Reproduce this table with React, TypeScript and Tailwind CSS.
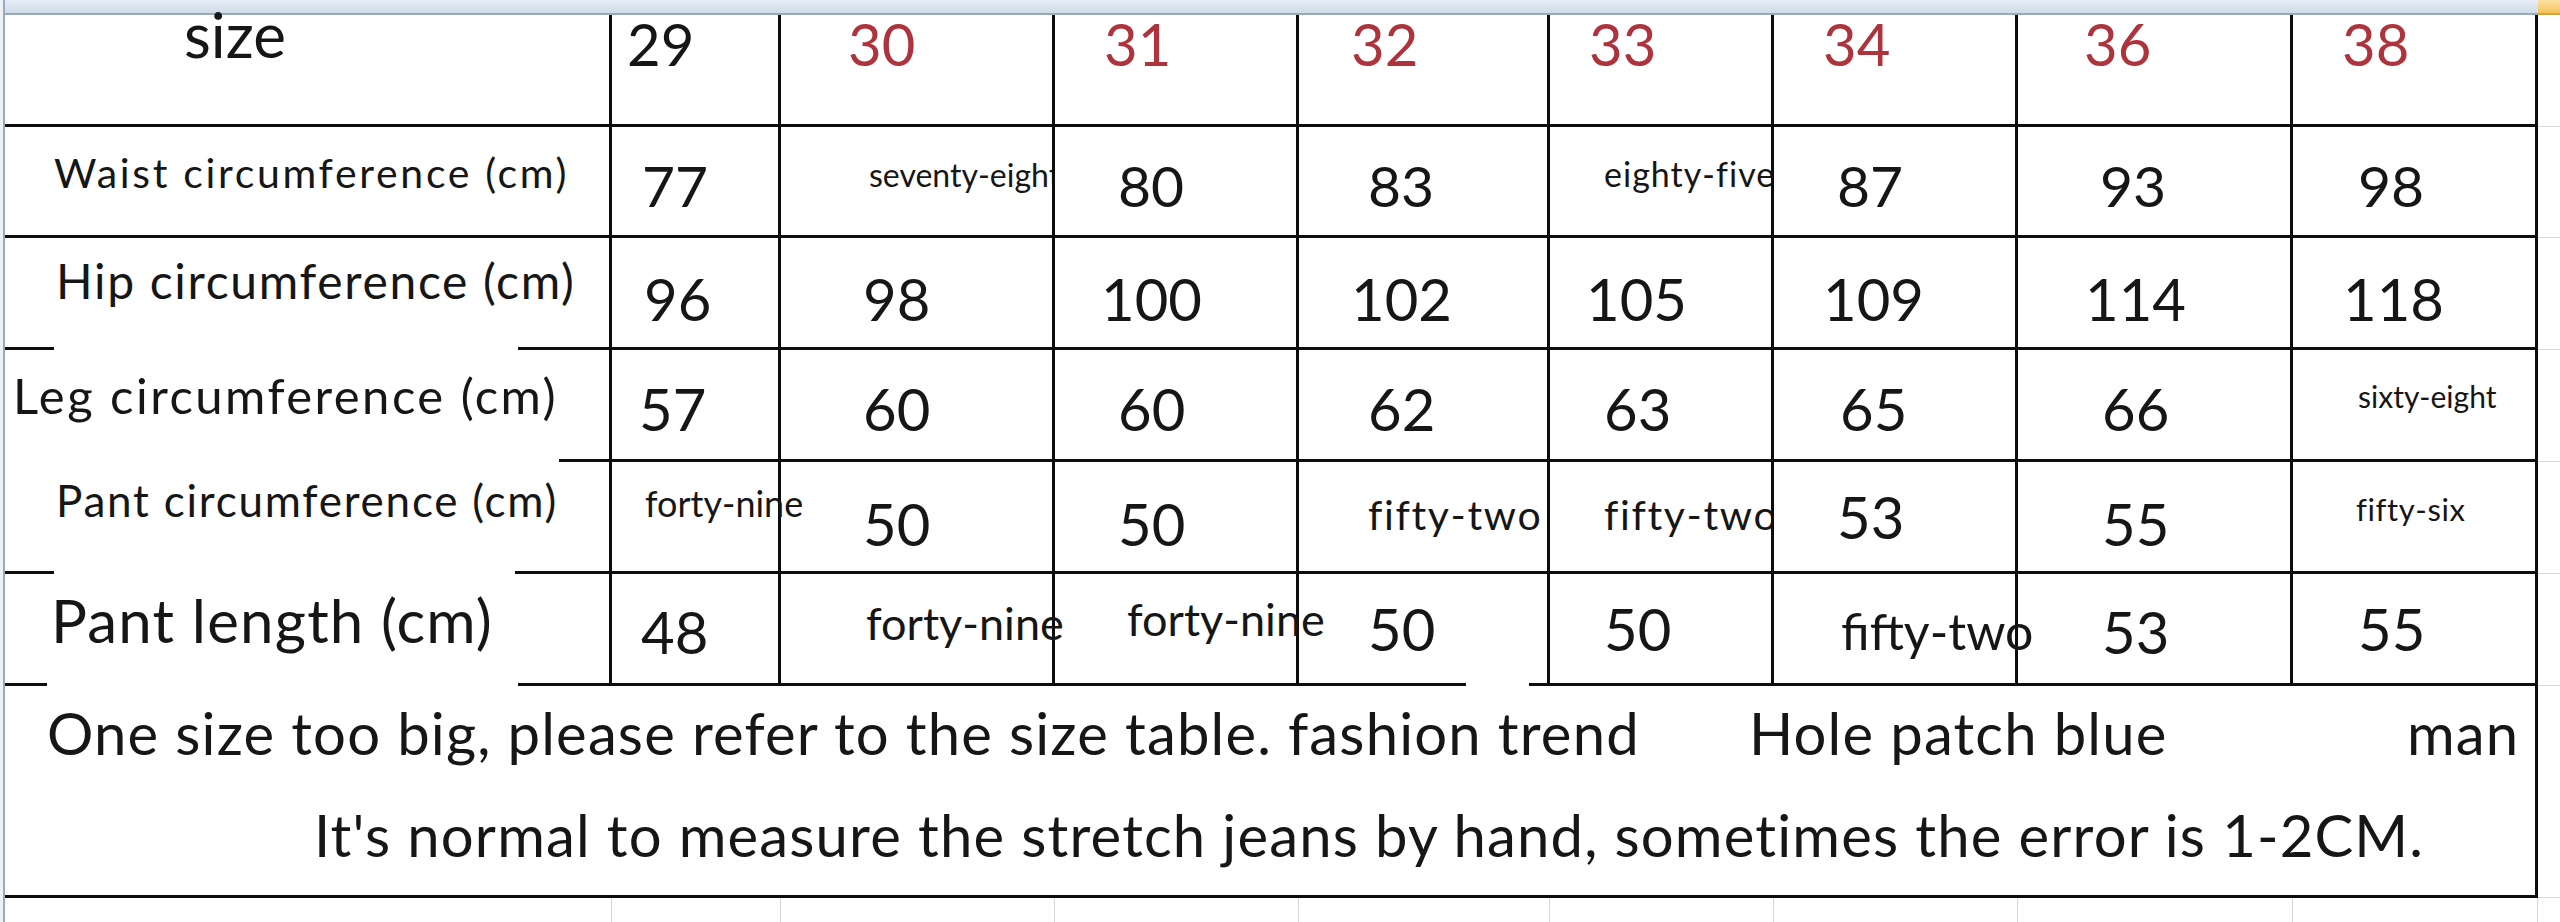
import clsx from "clsx";

type Cell = { t: string; cls: string; red?: boolean; clip?: boolean };
type Row = { h: string; cells: Cell[] };

const cols =
  "grid grid-cols-[607px_169px_274px_244px_251px_224px_244px_275px_245px]";

const rows: Row[] = [
  {
    h: "h-[109px]",
    cells: [
      { t: "size", cls: "pl-[179px] -mt-[12px] text-[62px]" },
      { t: "29", cls: "pl-[15px] text-[58px]" },
      { t: "30", cls: "pl-[67px] text-[58px]", red: true },
      { t: "31", cls: "pl-[49px] text-[58px]", red: true },
      { t: "32", cls: "pl-[52px] text-[58px]", red: true },
      { t: "33", cls: "pl-[39px] text-[58px]", red: true },
      { t: "34", cls: "pl-[49px] text-[58px]", red: true },
      { t: "36", cls: "pl-[66px] text-[58px]", red: true },
      { t: "38", cls: "pl-[49px] text-[58px]", red: true },
    ],
  },
  {
    h: "h-[108px]",
    cells: [
      { t: "Waist circumference (cm)", cls: "pl-[49px] pt-[25px] text-[41px] tracking-[0.065em]" },
      { t: "77", cls: "pl-[30px] pt-[30px] text-[57px]" },
      { t: "seventy-eight", cls: "pl-[88px] pt-[32px] text-[32px]", clip: true },
      { t: "80", cls: "pl-[63px] pt-[30px] text-[57px]" },
      { t: "83", cls: "pl-[69px] pt-[30px] text-[57px]" },
      { t: "eighty-five", cls: "pl-[54px] pt-[30px] text-[34px] tracking-[0.03em]", clip: true },
      { t: "87", cls: "pl-[63px] pt-[30px] text-[57px]" },
      { t: "93", cls: "pl-[82px] pt-[30px] text-[57px]" },
      { t: "98", cls: "pl-[65px] pt-[30px] text-[57px]" },
    ],
  },
  {
    h: "h-[109px]",
    cells: [
      { t: "Hip circumference (cm)", cls: "pl-[51px] pt-[19px] text-[48px] tracking-[0.035em]" },
      { t: "96", cls: "pl-[32px] pt-[32px] text-[58px]" },
      { t: "98", cls: "pl-[82px] pt-[32px] text-[58px]" },
      { t: "100", cls: "pl-[46px] pt-[32px] text-[58px]" },
      { t: "102", cls: "pl-[52px] pt-[32px] text-[58px]" },
      { t: "105", cls: "pl-[36px] pt-[32px] text-[58px]" },
      { t: "109", cls: "pl-[49px] pt-[32px] text-[58px]" },
      { t: "114", cls: "pl-[67px] pt-[32px] text-[58px]" },
      { t: "118", cls: "pl-[50px] pt-[32px] text-[58px]" },
    ],
  },
  {
    h: "h-[109px]",
    cells: [
      { t: "Leg circumference (cm)", cls: "pl-[8px] pt-[21px] text-[49px] tracking-[0.05em]" },
      { t: "57", cls: "pl-[27px] pt-[30px] text-[58px]" },
      { t: "60", cls: "pl-[82px] pt-[30px] text-[58px]" },
      { t: "60", cls: "pl-[63px] pt-[30px] text-[58px]" },
      { t: "62", cls: "pl-[69px] pt-[30px] text-[58px]" },
      { t: "63", cls: "pl-[54px] pt-[30px] text-[58px]" },
      { t: "65", cls: "pl-[66px] pt-[30px] text-[58px]" },
      { t: "66", cls: "pl-[84px] pt-[30px] text-[58px]" },
      { t: "sixty-eight", cls: "pl-[65px] pt-[31px] text-[30px]" },
    ],
  },
  {
    h: "h-[109px]",
    cells: [
      { t: "Pant circumference (cm)", cls: "pl-[51px] pt-[16px] text-[44px] tracking-[0.04em]" },
      { t: "forty-nine", cls: "pl-[33px] pt-[23px] text-[36px]" },
      { t: "50", cls: "pl-[82px] pt-[33px] text-[58px]" },
      { t: "50", cls: "pl-[63px] pt-[33px] text-[58px]" },
      { t: "fifty-two", cls: "pl-[69px] pt-[32px] text-[41px] tracking-[0.04em]" },
      { t: "fifty-two", cls: "pl-[54px] pt-[32px] text-[41px] tracking-[0.04em]", clip: true },
      { t: "53", cls: "pl-[63px] pt-[26px] text-[58px]" },
      { t: "55", cls: "pl-[84px] pt-[33px] text-[58px]" },
      { t: "fifty-six", cls: "pl-[63px] pt-[32px] text-[31px] tracking-[0.02em]" },
    ],
  },
  {
    h: "h-[109px]",
    cells: [
      { t: "Pant length (cm)", cls: "pl-[46px] pt-[16px] text-[60px] tracking-[0.02em]" },
      { t: "48", cls: "pl-[29px] pt-[29px] text-[58px]" },
      { t: "forty-nine", cls: "pl-[85px] pt-[27px] text-[45px]" },
      { t: "forty-nine", cls: "pl-[72px] pt-[23px] text-[45px]" },
      { t: "50", cls: "pl-[69px] pt-[26px] text-[58px]" },
      { t: "50", cls: "pl-[54px] pt-[26px] text-[58px]" },
      { t: "fifty-two", cls: "pl-[67px] pt-[32px] text-[50px]" },
      { t: "53", cls: "pl-[84px] pt-[29px] text-[58px]" },
      { t: "55", cls: "pl-[65px] pt-[26px] text-[58px]" },
    ],
  },
];

// horizontal rules under each row; gaps where the source image was patched
type Seg = { w: string; on: boolean };
const full: Seg[] = [{ w: "flex-1", on: true }];
const rules: Seg[][] = [
  full,
  full,
  [
    { w: "w-[49px]", on: true },
    { w: "w-[464px]", on: false },
    { w: "flex-1", on: true },
  ],
  [
    { w: "w-[554px]", on: false },
    { w: "flex-1", on: true },
  ],
  [
    { w: "w-[49px]", on: true },
    { w: "w-[461px]", on: false },
    { w: "flex-1", on: true },
  ],
  [
    { w: "w-[42px]", on: true },
    { w: "w-[471px]", on: false },
    { w: "w-[948px]", on: true },
    { w: "w-[63px]", on: false },
    { w: "flex-1", on: true },
  ],
];

function Rule({ segs }: { segs: Seg[] }) {
  return (
    <div className="flex h-[3px]">
      {segs.map((s, i) => (
        <div key={i} className={clsx(s.w, s.on ? "bg-[#0d0d0d]" : "bg-white")} />
      ))}
    </div>
  );
}

function TableRow({ row }: { row: Row }) {
  return (
    <div className={clsx(cols, row.h)}>
      {row.cells.map((c, i) => (
        <div
          key={i}
          className={clsx(
            "border-r-[3px] border-[#0d0d0d] whitespace-nowrap leading-none",
            c.clip && "overflow-hidden"
          )}
        >
          <div className={clsx(c.cls, c.red && "text-[#ad343d]")}>{c.t}</div>
        </div>
      ))}
    </div>
  );
}

export default function App() {
  return (
    <div className="flex h-[922px] w-[2560px] overflow-hidden bg-white font-[Lato,sans-serif] text-[#161616]">
      {/* row-header edge of the sheet */}
      <div className="h-full w-[5px] border-r-2 border-[#9aabbe] bg-[#eef2f7]" />

      <div className="flex w-[2555px] flex-col">
        {/* column-header strip */}
        <div className="flex h-[15px]">
          <div className="w-[2533px] border-b-2 border-[#9ba8b8] bg-gradient-to-b from-[#e6edf6] to-[#cfdbe8]" />
          <div className="w-[22px] border-b-2 border-[#d7a43f] bg-gradient-to-b from-[#fbe3a2] to-[#f2c259]" />
        </div>

        <div className="flex">
          <div className="flex w-[2533px] flex-col">
            {rows.map((r, i) => (
              <div key={i}>
                <TableRow row={r} />
                <Rule segs={rules[i]} />
              </div>
            ))}

            {/* notes row */}
            <div className="h-[209px] border-r-[3px] border-[#0d0d0d] whitespace-nowrap leading-none">
              <div className="flex pl-[42px] pt-[18px] text-[58px] tracking-[0.02em]">
                <span className="w-[1702px]">
                  One size too big, please refer to the size table. fashion trend
                </span>
                <span className="w-[658px]">Hole patch blue</span>
                <span>man</span>
              </div>
              <div className="mt-[44px] pl-[309px] text-[58px] tracking-[0.02em]">
                It's normal to measure the stretch jeans by hand, sometimes the error is 1-2CM.
              </div>
            </div>
            <Rule segs={full} />

            {/* empty sheet row below */}
            <div className={clsx(cols, "h-[24px]")}>
              {Array.from({ length: 9 }).map((_, i) => (
                <div key={i} className="border-r border-[#d6d6d6]" />
              ))}
            </div>
          </div>

          {/* sheet beyond the table */}
          <div className="flex w-[22px] flex-col">
            <div className="h-[112px] border-b border-[#dadada]" />
            <div className="h-[111px] border-b border-[#dadada]" />
            <div className="h-[112px] border-b border-[#dadada]" />
            <div className="h-[112px] border-b border-[#dadada]" />
            <div className="h-[112px] border-b border-[#dadada]" />
            <div className="h-[112px] border-b border-[#dadada]" />
            <div className="h-[212px] border-b border-[#dadada]" />
          </div>
        </div>
      </div>
    </div>
  );
}
